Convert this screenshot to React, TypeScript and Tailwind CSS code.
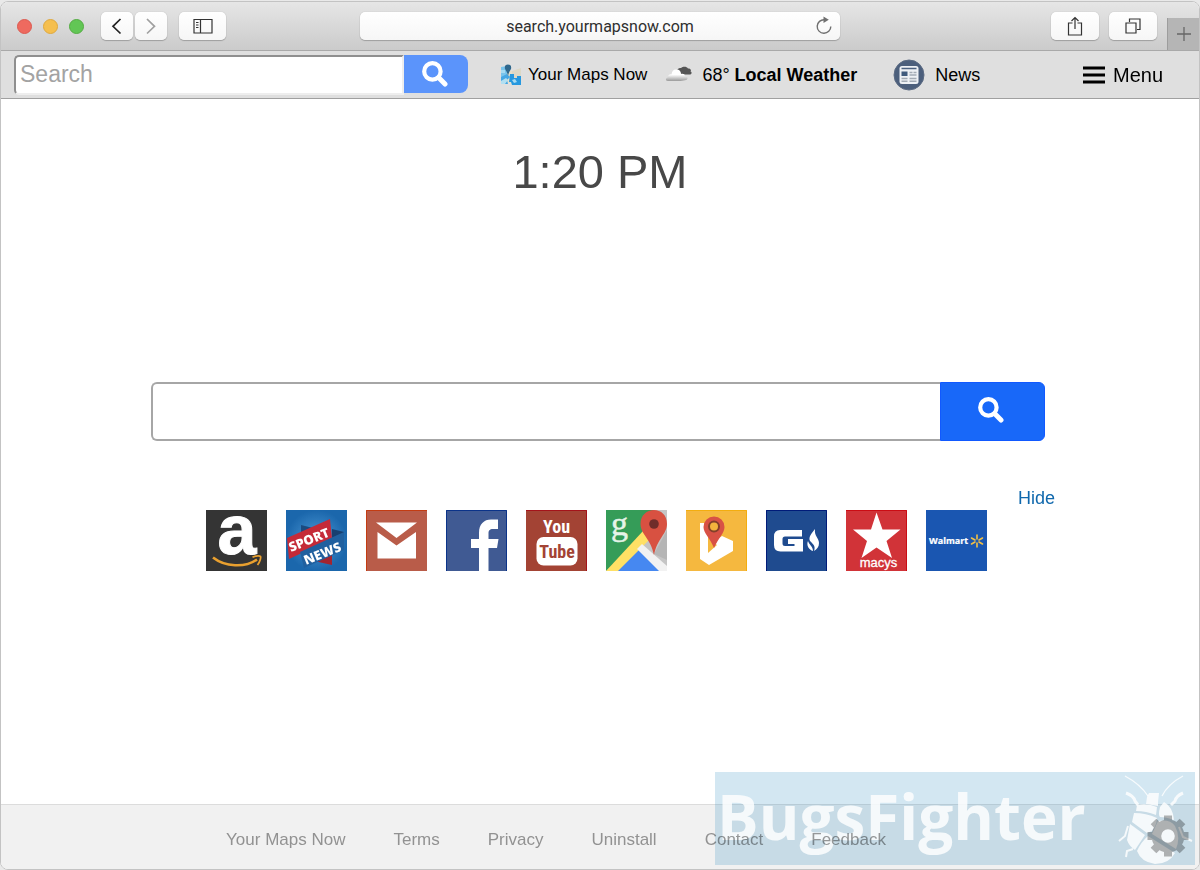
import React from "react";

const tile = "block size-[61px]";

function SearchGlyph({ className }: { className: string }) {
  return (
    <svg viewBox="0 0 26 26" className={className} fill="none" stroke="currentColor" aria-hidden="true">
      <circle cx="10.4" cy="10.4" r="8.2" strokeWidth="4.2" />
      <path d="M16.8 16.8 23 23" strokeWidth="5" strokeLinecap="round" />
    </svg>
  );
}

function ChromeButton({ label, className, children }: { label: string; className: string; children: React.ReactNode }) {
  return (
    <button
      type="button"
      aria-label={label}
      className={`flex h-7 items-center justify-center rounded-[5px] bg-linear-to-b from-white to-[#f6f6f6] shadow-[0_1px_1px_rgba(0,0,0,0.22),0_0_1px_rgba(0,0,0,0.25)] ${className}`}
    >
      {children}
    </button>
  );
}

function BrowserChrome() {
  return (
    <header className="grid h-[49px] grid-cols-[1fr_40%_1fr] items-center border-b border-b-[#a9a9a9] bg-linear-to-b from-[#e6e6e6] to-[#cbcbcb]">
      <div className="flex items-center pl-4">
        <div className="flex gap-[11px]">
          <button type="button" aria-label="Close" className="size-[15px] rounded-full border border-[#dc5a50] bg-[#ee6a5f]" />
          <button type="button" aria-label="Minimize" className="size-[15px] rounded-full border border-[#dfa93f] bg-[#f5bf4f]" />
          <button type="button" aria-label="Zoom" className="size-[15px] rounded-full border border-[#54ac42] bg-[#62c655]" />
        </div>
        <div className="ml-[17px] flex gap-[2px]">
          <ChromeButton label="Back" className="w-8">
            <svg viewBox="0 0 32 28" className="h-7 w-8" fill="none" stroke="#222" strokeWidth="1.7">
              <path d="M19.5 7 12 14.3 19.5 21.5" />
            </svg>
          </ChromeButton>
          <ChromeButton label="Forward" className="w-8">
            <svg viewBox="0 0 32 28" className="h-7 w-8" fill="none" stroke="#a0a0a0" strokeWidth="1.7">
              <path d="M12 7 19.5 14.3 12 21.5" />
            </svg>
          </ChromeButton>
        </div>
        <ChromeButton label="Show sidebar" className="ml-3 w-[47px]">
          <svg viewBox="0 0 20 16" className="h-4 w-5" fill="none" stroke="#333" strokeWidth="1.2">
            <path d="M1 1.5h18v13.500H1zM7.500 1.500V15M3 4.500h2.500M3 7h2.500M3 9.500h2.500" />
          </svg>
        </ChromeButton>
      </div>
      <div className="relative">
        <input
          aria-label="Address"
          defaultValue="search.yourmapsnow.com"
          className="block h-7 w-full rounded-[5px] bg-linear-to-b from-white to-[#f6f6f6] text-center font-[Roboto,sans-serif] text-base text-[#2f2f2f] shadow-[0_1px_1px_rgba(0,0,0,0.22),0_0_1px_rgba(0,0,0,0.25)] outline-none"
        />
        <button type="button" aria-label="Reload" className="absolute top-1 right-[6px]">
          <svg viewBox="0 0 20 20" className="size-5" fill="none" stroke="#707070" strokeWidth="1.4">
            <path d="M10.5 3.700A6.800 6.800 0 1 0 16.800 10.500" />
            <path d="M9.500 0.500 14.800 3.700 9.500 6.900Z" fill="#707070" stroke="none" />
          </svg>
        </button>
      </div>
      <div className="flex h-full items-center justify-end">
        <ChromeButton label="Share" className="w-12">
          <svg viewBox="0 0 16 20" className="h-5 w-4" fill="none" stroke="#333" strokeWidth="1.2">
            <path d="M5.500 7H1.500v12h13V7h-4M8 13V1.500M4.500 5 8 1.500 11.500 5" />
          </svg>
        </ChromeButton>
        <ChromeButton label="Show all tabs" className="ml-[10px] w-12">
          <svg viewBox="0 0 16 16" className="size-4" fill="none" stroke="#333" strokeWidth="1.2">
            <path d="M1 5h10v10H1zM4.500 4V1H15v10.500h-3" />
          </svg>
        </ChromeButton>
        <button type="button" aria-label="New tab" className="ml-[10px] flex h-8 w-8 items-center justify-center self-end border-l border-l-[#9d9d9d] bg-[#b5b5b5]">
          <svg viewBox="0 0 16 16" className="size-4" stroke="#666" strokeWidth="1.3">
            <path d="M8 1v14M1 8h14" />
          </svg>
        </button>
      </div>
    </header>
  );
}

function MapsIcon() {
  return (
    <svg viewBox="0 0 22 22" className="size-[22px]" aria-hidden="true">
      <path d="M1 3 7 2v11l-6 4z" fill="#79c4ec" />
      <path d="M7 6l5 1v13l-5-2z" fill="#e6dfc9" />
      <path d="M12 7l9-3v13l-9 3z" fill="#ddd8c5" />
      <path d="M1 13l6-3 3 3-3 3 1 4H1z" fill="#46a7e4" />
      <path d="M1 17l5-3 2 2-3 4H1z" fill="#b2dff1" />
      <path d="M10 10h4v4h3v-2h4v9h-9l-1-3H9z" fill="#2698df" />
      <path d="M1 6h4v3H1zM12 16l3-1 2 3-3 1z" fill="#a7dbf2" />
      <path d="M8 0.500a3.200 3.200 0 0 1 3.200 3.200c0 2-2 3-3.200 8-1-5-3.200-6-3.200-8A3.200 3.200 0 0 1 8 .5z" fill="#2f678c" />
    </svg>
  );
}

function WeatherIcon() {
  return (
    <svg viewBox="0 0 28 18" className="h-[18px] w-7" aria-hidden="true">
      <defs>
        <linearGradient id="cloud" x1="0" y1="0" x2="0" y2="1">
          <stop offset="0.45" stopColor="#fff" />
          <stop offset="1" stopColor="#999" />
        </linearGradient>
      </defs>
      <path d="M12 5c0-2 2-3.500 4-3 2-2 6-1.500 7 .5 3 0 3.500 2 2.500 3 2 .5 1 3-.5 3H17z" fill="#555" />
      <path d="M3 15c-3 0-2.500-3 0-4 0-2 2-3 3.500-2.500C7 4.500 9 3 11.500 3.500c3 0 4.500 2 4.500 4.500 2-.5 4 0 4 2.500 3 0 3 2 2 3-3 2-12.500 1.500-19 1.500z" fill="url(#cloud)" />
    </svg>
  );
}

function NewsIcon() {
  return (
    <svg viewBox="0 0 32 32" className="size-8" aria-hidden="true">
      <circle cx="16" cy="16" r="15" fill="#4c5f7c" stroke="#5d6c84" strokeWidth="1" />
      <rect x="6.500" y="7" width="19" height="18" rx="2.500" fill="#eef1f5" />
      <path d="M8.500 9.500h15" stroke="#4b6180" strokeWidth="1.700" />
      <rect x="8.500" y="12.500" width="6" height="4.500" fill="#405b7d" />
      <path d="M16.500 13.500h3M20.500 13.500h3M16.500 16h7M8.500 19.500h6M16.500 19.500h7M8.500 22.300h6M16.500 22.300h7" stroke="#a3abb5" strokeWidth="1.500" />
    </svg>
  );
}

function ExtensionBar() {
  return (
    <div className="flex h-12 items-center border-b border-b-[#a0a0a0] bg-[#dfdfdf] pr-9 pl-[13px] text-black">
      <form role="search" className="flex h-10 w-[454px] shrink-0 items-start" onSubmit={(e) => e.preventDefault()}>
        <input
          aria-label="Search"
          placeholder="Search"
          className="h-10 min-w-0 flex-1 rounded-l-[5px] border-2 border-t-[#8f8f8f] border-r-[#eee] border-b-[#eee] border-l-[#8f8f8f] bg-white pl-1 text-[23px] outline-none placeholder:text-[#a3a3a3]"
        />
        <button type="submit" aria-label="Search the web" className="flex h-[38px] w-16 items-center justify-center rounded-r-lg bg-[#5b94fb] pr-[3px] text-white">
          <SearchGlyph className="size-[26px]" />
        </button>
      </form>
      <nav className="flex flex-1 items-center" aria-label="Shortcuts">
        <a href="#maps" className="ml-8 flex items-center gap-[6px] text-[17px] leading-6"><MapsIcon />Your Maps Now</a>
        <a href="#weather" className="ml-[18px] flex items-center gap-[9px] text-[18px] leading-6"><WeatherIcon /><span>68° <b>Local Weather</b></span></a>
        <a href="#news" className="ml-9 flex items-center gap-[10px] text-[18px] leading-6"><NewsIcon />News</a>
        <button type="button" className="ml-auto flex items-center gap-2 text-[20px] leading-6">
          <svg viewBox="0 0 22 18" className="h-[18px] w-[22px]" stroke="#000" strokeWidth="2.800" aria-hidden="true">
            <path d="M0 2h22M0 9h22M0 16h22" />
          </svg>
          Menu
        </button>
      </nav>
    </div>
  );
}

const sites: { name: string; art: React.ReactNode }[] = [
  {
    name: "Amazon",
    art: (
      <svg viewBox="0 0 61 61" className={tile}>
        <rect width="61" height="61" fill="#343434" />
        <text x="31" y="44" textAnchor="middle" fontFamily="Liberation Sans, sans-serif" fontWeight="700" fontSize="70" fill="#fff" stroke="#fff" strokeWidth="1">a</text>
        <path d="M7 47.500C19 57 39 58 51 49.500" fill="none" stroke="#e9a02f" strokeWidth="2.600" />
        <path d="M46.500 47.300c4-2 7.500-1.500 8-.8s-.5 5.500-3 8.500" fill="none" stroke="#e9a02f" strokeWidth="1.800" />
      </svg>
    ),
  },
  {
    name: "Sport News",
    art: (
      <svg viewBox="0 0 61 61" className={tile}>
        <defs>
          <radialGradient id="sport"><stop stopColor="#4f9bd8" /><stop offset="1" stopColor="#1b67ac" /></radialGradient>
        </defs>
        <rect width="61" height="61" fill="url(#sport)" />
        <path d="M15 15l12 3v6l-12 5z" fill="#1b4a80" />
        <path d="M28 51l18-8v12z" fill="#a32430" />
        <path d="M46 19l12 3v7l-12 5z" fill="#173f70" />
        <path d="M1 28 44 9l2 20L3 49z" fill="#c52a38" />
        <path d="M14 42 58 22v18L18 58z" fill="#20609f" />
        <g fontFamily="Open Sans, sans-serif" fontWeight="800" fontSize="13" fill="#fff">
          <text transform="translate(5 42) rotate(-22)">SPORT</text>
          <text transform="translate(20 55) rotate(-22)">NEWS</text>
        </g>
      </svg>
    ),
  },
  {
    name: "Gmail",
    art: (
      <svg viewBox="0 0 61 61" className={tile}>
        <rect width="61" height="61" fill="#b95c49" />
        <path d="M.5 61V.5H61" fill="none" stroke="#c33c12" />
        <path d="M10 12.500h41L30.500 28zM11.500 22 30.500 35.500 50 22v26.500H11.500z" fill="#fff" />
      </svg>
    ),
  },
  {
    name: "Facebook",
    art: (
      <svg viewBox="0 0 61 61" className={tile}>
        <rect width="61" height="61" fill="#405a93" />
        <path d="M.5 61V.5H60.500V61" fill="none" stroke="#0b3389" />
        <path d="M33 61V38h-8v-9h8v-6c0-9 5-13.500 12-13.500h7V19h-5c-3.500 0-4.500 1.500-4.500 4.500V29h10l-1.500 9h-8.500v23z" fill="#fff" />
      </svg>
    ),
  },
  {
    name: "YouTube",
    art: (
      <svg viewBox="0 0 61 61" className={tile}>
        <rect width="61" height="61" fill="#a34334" />
        <path d="M0 .5H60.500V61" fill="none" stroke="#a4131a" />
        <rect x="10.500" y="27" width="41" height="28.500" rx="7" fill="#fff" />
        <g fontFamily="Liberation Sans Narrow, Roboto Condensed, Roboto, sans-serif" fontWeight="700" textAnchor="middle">
          <text x="30.500" y="23" fontSize="18" fill="#fff">You</text>
          <text x="31" y="48" fontSize="18" fill="#a34334">Tube</text>
        </g>
      </svg>
    ),
  },
  {
    name: "Google Maps",
    art: (
      <svg viewBox="0 0 61 61" className={tile}>
        <rect width="61" height="61" fill="#c5c5c5" />
        <path d="M0 0h48L36 30 0 61z" fill="#359c58" />
        <path d="M10 61 33 37 55 61z" fill="#4688f1" />
        <path d="M0 61 37 21l6 9L12 61z" fill="#ffe065" />
        <path d="M31 39l5-5 25 22v5h-8z" fill="#f2f2f2" />
        <path d="M61 20v30L48 44z" fill="#b5b5b5" />
        <path d="M34.500 14C34.500 5 41 0 48 0s13 5 13 14c0 10-10 15-13 31-3-16-13.500-21-13.500-31z" fill="#d85141" />
        <circle cx="48" cy="14" r="4.800" fill="#702d2a" />
        <text x="5" y="25" fontFamily="Liberation Serif, serif" fontSize="34" fill="#e6f3e8" stroke="#e6f3e8" strokeWidth=".5">g</text>
      </svg>
    ),
  },
  {
    name: "Bing Maps",
    art: (
      <svg viewBox="0 0 61 61" className={tile}>
        <rect width="61" height="61" fill="#f5b83f" />
        <path d="M0 .5H60.500V61" fill="none" stroke="#f3ad0f" />
        <path d="M14 13h8v30l9-8-4-3 9-6 11 5v10L23 55l-9-6z" fill="#fff" />
        <path d="M17.500 17a10.500 10.500 0 0 1 21 0c0 6-6 11-10.500 21-4-10-10.500-15-10.500-21z" fill="#d85145" />
        <circle cx="28" cy="16.500" r="5" fill="#f2b43d" stroke="#833f2a" strokeWidth="2" />
      </svg>
    ),
  },
  {
    name: "Gas Buddy",
    art: (
      <svg viewBox="0 0 61 61" className={tile}>
        <rect width="61" height="61" fill="#1f4b8f" />
        <path d="M.5 61V.5H60.500V61" fill="none" stroke="#001b79" />
        <path d="M14 20H36V26.500H19q-2.500 0-2.500 2.500v4.500q0 2.500 2.500 2.500h9.500v-2H22v-5h15v12.500H14.500Q8 41.500 8 35V26.500Q8 20 14 20z" fill="#fff" />
        <path d="M49 19c-1 7 4 9 4 14 0 4-2 6-5 8 2-5-1-7-4-10-2-4 2-8 5-12zM42 31c1 4 5 5 5 10-4-1-7-6-5-10z" fill="#fff" />
      </svg>
    ),
  },
  {
    name: "Macy's",
    art: (
      <svg viewBox="0 0 61 61" className={tile}>
        <rect width="61" height="61" fill="#d13338" />
        <path d="M0 .5H60.500V61" fill="none" stroke="#cb0c14" />
        <path d="M30.500 2.500 36.500 19.500H54.500L40.500 31 46 48 30.500 37.500 15.500 48 21 31 7 19.500H25z" fill="#fff" />
        <text x="32.500" y="57" textAnchor="middle" fontFamily="Liberation Sans, sans-serif" fontSize="13" fill="#fff" stroke="#fff" strokeWidth=".3">macys</text>
      </svg>
    ),
  },
  {
    name: "Walmart",
    art: (
      <svg viewBox="0 0 61 61" className={tile}>
        <rect width="61" height="61" fill="#1a56b1" />
        <text x="3" y="34" fontFamily="Open Sans, sans-serif" fontWeight="700" fontSize="9" fill="#fff" stroke="#fff" strokeWidth=".2">Walmart</text>
        <path d="M51 25v4M51 33v4M45.500 28l3.500 2M53 32l3.500 2M45.500 34l3.500-2M53 30l3.500-2" stroke="#f2c044" strokeWidth="1.600" strokeLinecap="round" />
      </svg>
    ),
  },
];

function Watermark() {
  return (
    <div className="absolute right-1 bottom-1 z-10 flex h-[93px] w-[480px] bg-[#2285bd]/20">
      <svg viewBox="0 0 480 93" className="h-full w-full" fill="#fff" fillOpacity="0.82">
        <text x="2" y="68" fontFamily="Open Sans, sans-serif" fontWeight="700" fontSize="62">BugsFighter</text>
        <path d="M434 21h10l-1 9v4l-12-2 1-7z" />
        <path d="M422 33q11-2 20 2l-1 8q-10-4-20-4zM445 35l4-5q9 5 10 18-8-3-14-3-2-2 0-10z" />
        <path d="M419 41q12 0 23 5 0 7-5 13l-5 2-15-11zM415 52l15 11-10 15q-6-4-8-10zM422 79q4-9 11-15l27 17q-6 11-20 11-14-2-18-13zM443 49q12-2 17 5 6 11 1 23l-24-15z" />
        <g fill="none" stroke="#fff" strokeOpacity="0.82">
          <path d="M410 4q15 8 23 20M468 4q-15 8-21 20" strokeWidth="1.300" />
          <path d="M411 21q8 3 9 8l3 4M468 21q-7 3-8 8l-4 4" strokeWidth="3" />
          <path d="M413 54l-3 10-6 5M418 77l-6 2-1 6M464 55l4 10 9 4" strokeWidth="2" />
        </g>
      </svg>
    </div>
  );
}

const footerLinks = ["Your Maps Now", "Terms", "Privacy", "Uninstall", "Contact", "Feedback"];
const gearTeeth = [0, 45, 90, 135, 180, 225, 270, 315];

export default function App() {
  return (
    <div className="min-h-screen bg-[#e9e9e9] pt-px font-['Liberation_Sans',Arial,sans-serif]">
      <div className="relative isolate flex min-h-[calc(100vh-1px)] flex-col overflow-hidden rounded-lg border border-[#c3c3c3] bg-white">
        <BrowserChrome />
        <ExtensionBar />
        <main className="flex flex-1 flex-col items-center px-8 pt-[45px]">
          <time className="text-[47px] leading-[56px] text-[#484848]">1:20 PM</time>
          <div className="w-full max-w-[910px] pt-[182px]">
            <form role="search" className="mr-[10px] ml-[6px] flex h-[59px]" onSubmit={(e) => e.preventDefault()}>
              <input aria-label="Search the web" className="min-w-0 flex-1 rounded-l-md border-2 border-r-0 border-[#a6a6a6] bg-white px-4 text-xl outline-none" />
              <button type="submit" aria-label="Go" className="flex w-[105px] items-center justify-center rounded-r-md border border-[#1159ff] bg-[#1868f9] pr-1 pb-[3px] text-white">
                <SearchGlyph className="size-[26px]" />
              </button>
            </form>
            <section className="pt-[45px]" aria-label="Top sites">
              <div className="flex justify-end"><button type="button" className="text-[18px] leading-6 text-[#1068ad]">Hide</button></div>
              <ul className="flex flex-wrap justify-center gap-[19px] pr-2">
                {sites.map((site) => (
                  <li key={site.name}><a href="#site" aria-label={site.name} className="block">{site.art}</a></li>
                ))}
              </ul>
            </section>
          </div>
        </main>
        <footer className="flex h-[65px] items-center border-t border-t-[#dcdcdc] bg-[#f1f1f1] pt-[6px]">
          <nav className="z-20 flex flex-1 justify-center gap-12 pr-[88px] text-[17px] leading-6 text-[#9b9b9b] mix-blend-multiply" aria-label="Footer">
            {footerLinks.map((name) => (
              <a key={name} href="#info">{name}</a>
            ))}
          </nav>
        </footer>
        <Watermark />
        <button type="button" aria-label="Settings" className="absolute right-[10px] bottom-3 z-20 mix-blend-multiply">
          <svg viewBox="-21 -21 42 42" className="size-[42px]" fill="#b5b5b5">
            {gearTeeth.map((angle) => (
              <rect key={angle} x="-4" y="-20.500" width="8" height="9" transform={`rotate(${angle})`} />
            ))}
            <path fillRule="evenodd" d="M0-16.500a16.500 16.500 0 1 1 0 33 16.500 16.500 0 1 1 0-33zM0-6.800a6.800 6.800 0 1 0 0 13.600 6.800 6.800 0 1 0 0-13.600z" />
          </svg>
        </button>
      </div>
    </div>
  );
}
